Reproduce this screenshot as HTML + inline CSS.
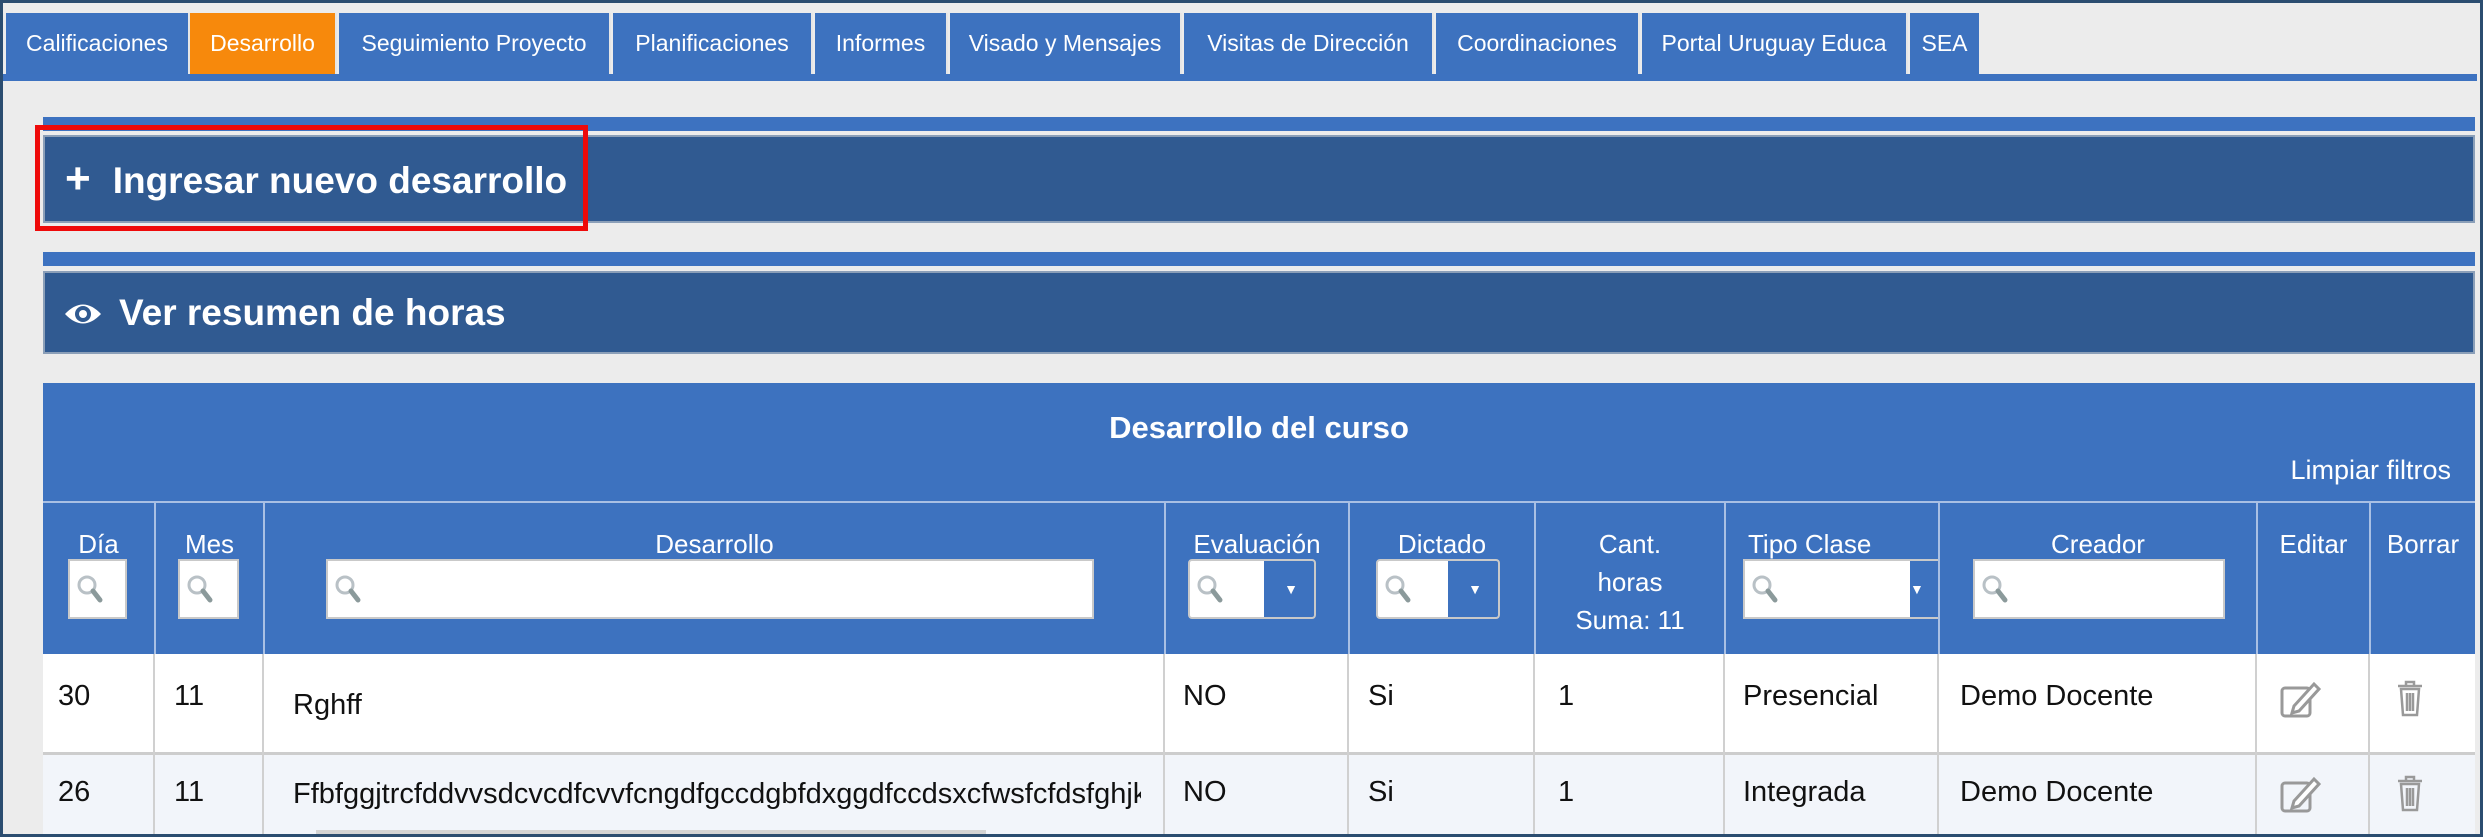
<!DOCTYPE html>
<html><head><meta charset="utf-8"><style>
*{box-sizing:border-box;margin:0;padding:0}
body{width:2483px;height:837px;overflow:hidden;background:#ececec;font-family:"Liberation Sans Narrow","Liberation Sans",sans-serif;position:relative}
.a{position:absolute}
.frame{left:0;top:0;width:2483px;height:837px;border:3px solid #2b4d70;z-index:50;pointer-events:none}
.tab{position:absolute;top:13px;height:61px;background:#3d72bf;color:#fff;font-size:23px;line-height:61px;text-align:center;border-right:2px solid #e6e6e6}
.strip{left:43px;width:2432px;background:#3d72c0}
.panel{left:43px;width:2432px;background:#305a91;border:2px solid #8b9fb8;color:#fff;font-weight:bold;font-size:37px;font-family:"Liberation Sans",sans-serif}
.th{position:absolute;top:503px;height:151px;border-left:2px solid #a9c0e4;color:#fff;font-size:26px;text-align:center;padding-top:22px;line-height:38px}
.inp{position:absolute;background:#fff;border:2px solid #c9c9c9;height:60px;top:559px}
.vl{position:absolute;top:654px;height:183px;width:2px;background:#d0d0d0}
.t{position:absolute;font-size:29px;color:#111}
</style></head><body>
<div class="a frame"></div>
<div class="tab" style="left:6px;width:184px">Calificaciones</div>
<div class="tab" style="left:190px;width:147px;background:#f7890c">Desarrollo</div>
<div class="tab" style="left:339px;width:272px">Seguimiento Proyecto</div>
<div class="tab" style="left:613px;width:200px">Planificaciones</div>
<div class="tab" style="left:815px;width:133px">Informes</div>
<div class="tab" style="left:950px;width:232px">Visado y Mensajes</div>
<div class="tab" style="left:1184px;width:250px">Visitas de Dirección</div>
<div class="tab" style="left:1436px;width:204px">Coordinaciones</div>
<div class="tab" style="left:1642px;width:266px">Portal Uruguay Educa</div>
<div class="tab" style="left:1910px;width:69px;border-right:none">SEA</div>
<div class="a" style="left:3px;top:74px;width:2474px;height:7px;background:#3d72c0"></div>

<div class="a strip" style="top:117px;height:14px"></div>
<div class="a panel" style="top:135px;height:88px;line-height:84px;padding-left:20px"><span style="font-size:44px;margin-right:22px">+</span>Ingresar nuevo desarrollo</div>
<div class="a" style="left:35px;top:125px;width:553px;height:106px;border:5px solid #ee0a0a;z-index:5"></div>

<div class="a strip" style="top:252px;height:14px"></div>
<div class="a panel" style="top:271px;height:83px;line-height:80px;padding-left:18px">
<svg width="40" height="30" viewBox="0 0 40 30" style="vertical-align:-4px;margin-right:16px"><path d="M2 15 Q20 -4 38 15 Q20 34 2 15Z" fill="#fff"/><circle cx="20" cy="15" r="8" fill="#305a91"/><circle cx="20" cy="15" r="4" fill="#fff"/></svg>Ver resumen de horas</div>

<div class="a" style="left:43px;top:383px;width:2432px;height:454px;background:#3d72bf"></div>
<div class="a" style="left:43px;top:410px;width:2432px;text-align:center;color:#fff;font-weight:bold;font-size:31px">Desarrollo del curso</div>
<div class="a" style="right:32px;top:455px;color:#fff;font-size:27px">Limpiar filtros</div>
<div class="a" style="left:43px;top:501px;width:2432px;height:2px;background:#a9c0e4"></div>

<div class="th" style="left:43px;width:111px;border-left:none">Día</div>
<div class="th" style="left:154px;width:109px">Mes</div>
<div class="th" style="left:263px;width:901px">Desarrollo</div>
<div class="th" style="left:1164px;width:184px">Evaluación</div>
<div class="th" style="left:1348px;width:186px">Dictado</div>
<div class="th" style="left:1534px;width:190px">Cant.<br>horas<br>Suma: 11</div>
<div class="th" style="left:1724px;width:214px;text-align:left;padding-left:22px">Tipo Clase</div>
<div class="th" style="left:1938px;width:318px">Creador</div>
<div class="th" style="left:2256px;width:113px">Editar</div>
<div class="th" style="left:2369px;width:106px">Borrar</div>

<svg width="0" height="0" style="position:absolute"><defs><g id="mg"><circle cx="12" cy="12" r="8" fill="none" stroke="#b9c1c6" stroke-width="3"/><path d="M18 18 L25 27" stroke="#8b9a9b" stroke-width="5" stroke-linecap="round"/></g></defs></svg>
<div class="inp" style="left:68px;width:59px"><svg class="a" style="left:5px;top:12px" width="30" height="32"><use href="#mg"/></svg></div>
<div class="inp" style="left:178px;width:61px"><svg class="a" style="left:5px;top:12px" width="30" height="32"><use href="#mg"/></svg></div>
<div class="inp" style="left:326px;width:768px"><svg class="a" style="left:5px;top:12px" width="30" height="32"><use href="#mg"/></svg></div>
<div class="inp" style="left:1188px;width:128px;border-radius:4px;overflow:hidden"><svg class="a" style="left:5px;top:12px" width="30" height="32"><use href="#mg"/></svg><div class="a" style="left:74px;top:0;width:54px;height:60px;background:#3d72bf;color:#fff;font-size:14px;text-align:center;line-height:56px">▼</div></div>
<div class="inp" style="left:1376px;width:124px;border-radius:4px;overflow:hidden"><svg class="a" style="left:5px;top:12px" width="30" height="32"><use href="#mg"/></svg><div class="a" style="left:70px;top:0;width:54px;height:60px;background:#3d72bf;color:#fff;font-size:14px;text-align:center;line-height:56px">▼</div></div>
<div class="inp" style="left:1743px;width:195px;border-right:none;overflow:hidden"><svg class="a" style="left:5px;top:12px" width="30" height="32"><use href="#mg"/></svg><div class="a" style="left:165px;top:0;width:40px;height:60px;background:#3d72bf;color:#fff;font-size:14px;line-height:56px">▼</div></div>
<div class="inp" style="left:1973px;width:252px"><svg class="a" style="left:5px;top:12px" width="30" height="32"><use href="#mg"/></svg></div>

<div class="a" style="left:43px;top:654px;width:2432px;height:98px;background:#fff"></div>
<div class="a" style="left:43px;top:752px;width:2432px;height:3px;background:#cdcdcd"></div>
<div class="a" style="left:43px;top:755px;width:2432px;height:82px;background:#f2f5fa"></div>
<div class="vl" style="left:153px"></div><div class="vl" style="left:262px"></div><div class="vl" style="left:1163px"></div><div class="vl" style="left:1347px"></div><div class="vl" style="left:1533px"></div><div class="vl" style="left:1723px"></div><div class="vl" style="left:1937px"></div><div class="vl" style="left:2255px"></div><div class="vl" style="left:2368px"></div>

<div class="t" style="left:58px;top:680px">30</div>
<div class="t" style="left:174px;top:680px">11</div>
<div class="t" style="left:293px;top:689px">Rghff</div>
<div class="t" style="left:1183px;top:680px">NO</div>
<div class="t" style="left:1368px;top:680px">Si</div>
<div class="t" style="left:1558px;top:680px">1</div>
<div class="t" style="left:1743px;top:680px">Presencial</div>
<div class="t" style="left:1960px;top:680px">Demo Docente</div>

<div class="t" style="left:58px;top:776px">26</div>
<div class="t" style="left:174px;top:776px">11</div>
<div class="t" style="left:293px;top:778px;width:848px;overflow:hidden;white-space:nowrap">Ffbfggjtrcfddvvsdcvcdfcvvfcngdfgccdgbfdxggdfccdsxcfwsfcfdsfghjkl</div>
<div class="t" style="left:1183px;top:776px">NO</div>
<div class="t" style="left:1368px;top:776px">Si</div>
<div class="t" style="left:1558px;top:776px">1</div>
<div class="t" style="left:1743px;top:776px">Integrada</div>
<div class="t" style="left:1960px;top:776px">Demo Docente</div>
<div class="a" style="left:316px;top:830px;width:670px;height:5px;background:#d4d4d4"></div>

<svg class="a" style="left:2280px;top:680px" width="42" height="40" viewBox="0 0 42 40"><rect x="2" y="8" width="28" height="28" rx="3" fill="none" stroke="#999" stroke-width="3"/><path d="M14 26 L34 4 L39 9 L19 31 L12 33Z" fill="#fff" stroke="#999" stroke-width="3"/></svg>
<svg class="a" style="left:2394px;top:678px" width="32" height="40" viewBox="0 0 32 40"><path d="M4 8 H28 M12 8 V4 H20 V8 M7 11 H25 L23 37 H9Z M13 15 V33 M16 15 V33 M19 15 V33" fill="none" stroke="#999" stroke-width="2.5"/></svg>
<svg class="a" style="left:2280px;top:775px" width="42" height="40" viewBox="0 0 42 40"><rect x="2" y="8" width="28" height="28" rx="3" fill="none" stroke="#999" stroke-width="3"/><path d="M14 26 L34 4 L39 9 L19 31 L12 33Z" fill="#fff" stroke="#999" stroke-width="3"/></svg>
<svg class="a" style="left:2394px;top:773px" width="32" height="40" viewBox="0 0 32 40"><path d="M4 8 H28 M12 8 V4 H20 V8 M7 11 H25 L23 37 H9Z M13 15 V33 M16 15 V33 M19 15 V33" fill="none" stroke="#999" stroke-width="2.5"/></svg>
</body></html>
